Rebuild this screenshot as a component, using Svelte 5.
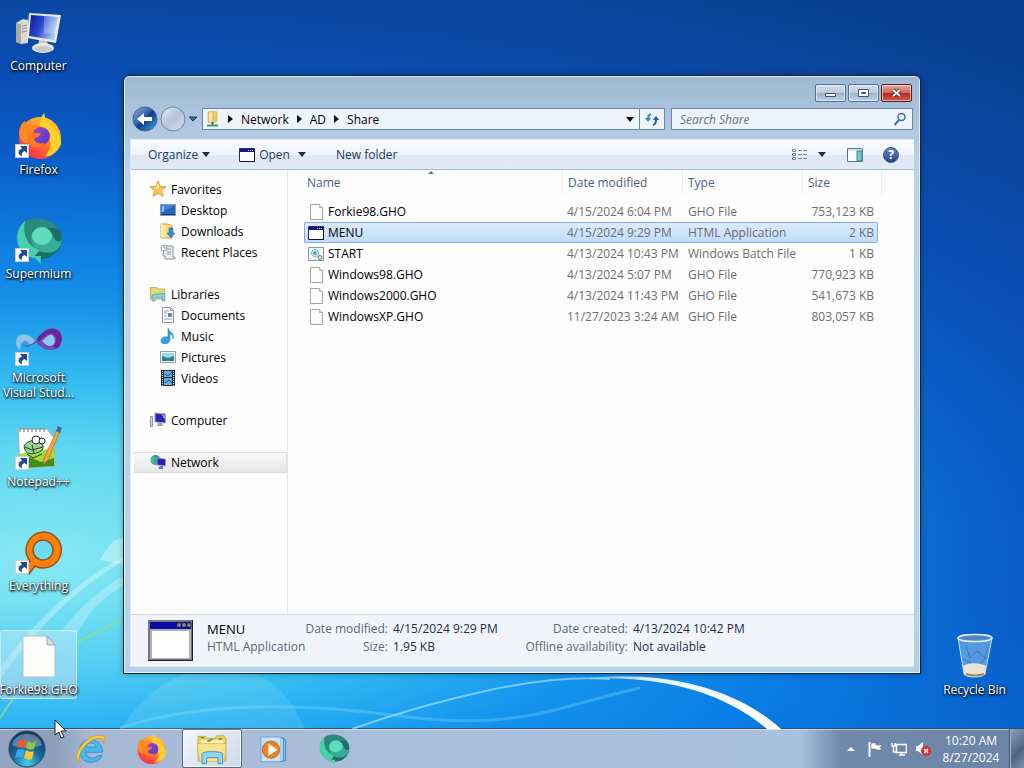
<script>
    const shortcuts = [
        { name: "Computer", icon: "pc", link: false },
        { name: "Firefox", icon: "firefox", link: true },
        { name: "Supermium", icon: "supermium", link: true },
        { name: "Microsoft Visual Stud...", icon: "vs", link: true },
        { name: "Notepad++", icon: "npp", link: true },
        { name: "Everything", icon: "everything", link: true },
        { name: "Forkie98.GHO", icon: "blank", link: false, selected: true }
    ]

    const groups = [
        { name: "Favorites", icon: "star", items: [
            { name: "Desktop", icon: "desktop" },
            { name: "Downloads", icon: "downloads" },
            { name: "Recent Places", icon: "recent" }
        ] },
        { name: "Libraries", icon: "libraries", items: [
            { name: "Documents", icon: "document" },
            { name: "Music", icon: "music" },
            { name: "Pictures", icon: "pictures" },
            { name: "Videos", icon: "videos" }
        ] },
        { name: "Computer", icon: "minipc", items: [] },
        { name: "Network", icon: "network", items: [], selected: true }
    ]

    const files = [
        { name: "Forkie98.GHO", icon: "file", date: "4/15/2024 6:04 PM", type: "GHO File", size: "753,123 KB" },
        { name: "MENU", icon: "app", date: "4/15/2024 9:29 PM", type: "HTML Application", size: "2 KB" },
        { name: "START", icon: "batch", date: "4/13/2024 10:43 PM", type: "Windows Batch File", size: "1 KB" },
        { name: "Windows98.GHO", icon: "file", date: "4/13/2024 5:07 PM", type: "GHO File", size: "770,923 KB" },
        { name: "Windows2000.GHO", icon: "file", date: "4/13/2024 11:43 PM", type: "GHO File", size: "541,673 KB" },
        { name: "WindowsXP.GHO", icon: "file", date: "11/27/2023 3:24 AM", type: "GHO File", size: "803,057 KB" }
    ]

    const pinned = [
        { name: "Internet Explorer", icon: "ie" },
        { name: "Firefox", icon: "firefox" },
        { name: "Windows Explorer", icon: "explorer", active: true },
        { name: "Windows Media Player", icon: "wmp" },
        { name: "Supermium", icon: "supermium" }
    ]

    let selected = $state("MENU")
</script>

<!-- 48px icons, used on the desktop and in the taskbar -->
{#snippet bigIcon(name)}
    <svg class="big" viewBox="0 0 48 48" aria-hidden="true">
        {#if name === "pc"}
            <path d="M1 15l7-4 5 1v23l-7 1-5-2z" fill="#d9d9d3" />
            <path d="M1 15l5 1v20l-5-2z" fill="#a9aaa4" />
            <path d="M7 18l5-1M7 21l5-1M7 24l5-1" stroke="#8b8d88" />
            <path d="M24 32h8l1 7h-10z" fill="#c9c9c3" />
            <ellipse cx="28" cy="40" rx="11" ry="5" fill="#e9e8e0" />
            <ellipse cx="28" cy="41" rx="9" ry="3" fill="#cbcac2" />
            <path d="M14 5l32 2-5 28-29-5z" fill="#ebebe4" />
            <path d="M16 7l27 2-4 23-25-4z" fill="url(#screen)" />
            <path d="M29 8l14 1-2 16-12 1z" fill="#fff" opacity=".25" />
        {:else if name === "firefox"}
            <circle cx="25" cy="26" r="21" fill="url(#fox)" />
            <path d="M29 1c2 5 0 7 5 11 7 6 13 12 12 20-3 8-10 13-16 12 8-8 8-20-4-26-3-6 0-13 3-17z" fill="#ffcf2e" />
            <path d="M4 20C5 13 8 10 10 9l2 5c5-3 9-1 13 0l4 3c-4 1-6 3-9 4-2 5-8 4-7 10-5 1-9-5-9-11z" fill="#ff8a22" />
            <circle cx="26" cy="24" r="9" fill="url(#violet)" />
            <path d="M13 20c5-1 6 2 13 1-1 4-5 4-7 6 1 4 6 6 11 3-4 7-14 7-17 0z" fill="#ff7a20" />
        {:else if name === "supermium"}
            <ellipse cx="25" cy="23" rx="22" ry="20" fill="#1c6f68" />
            <path d="M10 5C-4 18 2 38 18 42l8-9C12 32 9 18 10 5z" fill="#48d0ad" />
            <path d="M10 6c9-7 27-4 34 8-8-4-20-2-27 2 0 8 2 14 9 18C9 30 8 14 10 6z" fill="#2b8a7d" />
            <path d="M17 17c6-6 18-5 21 3 3 7 7 6 9 4-1 10-11 15-19 12-8-1-14-10-11-19z" fill="#35ae97" />
            <ellipse cx="27" cy="20" rx="10" ry="9" fill="#5fdcbe" />
            <path d="M14 40c6 2 8 4 12 8-1-4 0-6 0-8z" fill="#48d0ad" />
        {:else if name === "vs"}
            <g transform="translate(0 8)">
                <path d="M2 10c5-7 14-3 18 3l-4 5C11 9 6 12 5 22c-4-2-5-8-3-12z" fill="#8fc3e6" />
                <path d="M5 14c6 7 13 2 17-3C28 2 37-3 44 3c5 6 3 15-3 18-8 3-15-1-20-7-5 5-11 7-16 0z" fill="#6f4fae" />
                <path d="M27 13c5-5 10-9 12-4 2 5 0 8-3 9-4 0-6-2-9-5z" fill="#8fc6f2" />
                <path d="M22 11C28 2 37-3 44 3c5 6 3 15-3 18l-3-3c5-5 3-10 0-12-5-2-10 4-14 8z" fill="#6d2397" />
            </g>
        {:else if name === "npp"}
            <path d="M3 5h29l7 9 1 28-35 2z" fill="#fff" stroke="#a3a9a0" />
            <path d="M4 30l35-6 1 18-35 2z" fill="#a6dc3a" />
            <path d="M5 38l9-5 12 5 13-4v8l-34 2z" fill="#408c1d" />
            <path d="M5 4v4m4-4v4m4-4v4m4-4v4m4-4v4m4-4v4m4-4v4" stroke="#68716b" />
            <path d="M9 22c4-6 9-6 15-4 6 3 5 8 0 10-7 3-14 3-15-6z" fill="#9bd594" stroke="#274a23" />
            <circle cx="21" cy="16" r="4" fill="#fff" stroke="#222" /><circle cx="27" cy="17" r="3" fill="#fff" stroke="#222" />
            <path d="M10 23l7 3 11-3M12 30l6 4 9-4M17 21l2 8" fill="none" stroke="#23411d" />
            <path d="M42 6l3 1-12 29-4 4v-6z" fill="#f3a640" stroke="#b5702a" stroke-width=".7" />
            <path d="M43 2l4 2-2 5-4-2z" fill="#486996" />
        {:else if name === "everything"}
            <path d="M28 4a18 18 0 1 1-8 34l-6 8-7-4 8-9A18 18 0 0 1 28 4z" fill="#ff7d0b" stroke="#8a581e" stroke-width="1.500" />
            <circle cx="28" cy="22" r="10" fill="#6edaf3" stroke="#8a581e" stroke-width="1.500" />
        {:else if name === "blank"}
            <path d="M8 4h24l8 9v32H8z" fill="#fcfcfa" stroke="#b9bfc3" />
            <path d="M32 4v9h8z" fill="#dbe0e3" stroke="#9ba5ab" />
        {:else if name === "bin"}
            <path d="M7 6l6 36c1 4 20 4 21 0l7-36z" fill="#a6cdf0" opacity=".5" />
            <path d="M7 6l6 36c1 4 20 4 21 0l7-36" fill="none" stroke="#c4def2" />
            <path d="M12 34c6-4 17-3 23 0l-1 8c-3 4-18 4-21 0z" fill="#e8e3d4" />
            <path d="M15 42c5 2 13 2 18 0" stroke="#a08266" stroke-width="2" fill="none" />
            <path d="M15 14l4 12 7-7 8 7 3-11M12 27l8 4M29 31l7-6" fill="none" stroke="#2f62b8" opacity=".7" />
            <ellipse cx="24" cy="6" rx="17" ry="3.500" fill="#4f86c6" stroke="#e0f0fa" stroke-width="1.500" />
        {:else if name === "ie"}
            <path d="M43 29H18c1 10 13 11 17 5h7C38 47 10 50 8 27 8 4 43 4 43 29zM18 21h15c-1-8-14-8-15 0z" fill="#49b8ec" stroke="#1b7fc0" />
            <path d="M8 43C-7 39 18-2 43 4c6 2 3 9 1 13 1-6 0-9-5-9C24 6 4 29 8 43z" fill="#f7cb35" stroke="#c99312" />
        {:else if name === "explorer"}
            <path d="M3 5h11l2 3h13l2-4h11l3 4v34H3z" fill="#edce5e" stroke="#ba972f" />
            <path d="M7 11h34v26H7z" fill="#fff5be" />
            <path d="M2 16h43l-2 27H5z" fill="#f8e48a" stroke="#cfae44" />
            <path d="M7 7h5M20 10h5M34 9h5" stroke="#3ba251" stroke-width="2" /><path d="M17 12h5" stroke="#c8462d" stroke-width="2" />
            <path d="M9 46V31c0-4 31-4 31 0v15h-7V37H16v9z" fill="#94d3f2" stroke="#3e93c7" stroke-width="1.500" />
        {:else if name === "wmp"}
            <path d="M6 6h30v37H6z" fill="#c6e2f4" stroke="#5a94c4" />
            <path d="M36 7l4 1v34l-4 1M40 9l3 1v31l-3 1" fill="#a9d2f1" stroke="#3d83bd" stroke-width="1.500" />
            <circle cx="21" cy="25" r="13" fill="#f18220" stroke="#a9500c" />
            <path d="M17 16l14 9-14 9z" fill="#fff" />
        {/if}
    </svg>
{/snippet}

<!-- 16px icons, used in the folder window -->
{#snippet smallIcon(name)}
    <svg class="small" viewBox="0 0 16 16" aria-hidden="true">
        {#if name === "star"}
            <path d="M8 0l2.200 5.500 5.800.3-4.500 3.700 1.500 6L8 12.200 3 15.500l1.500-6L0 5.800l5.800-.3z" fill="#ffc947" stroke="#d28a2b" stroke-width=".8" />
            <path d="M8 2l1.500 4.500L5 8z" fill="#ffe9a6" />
        {:else if name === "desktop"}
            <path d="M.5 2.500h15v11H.5z" fill="#2b67b7" stroke="#7d9cc2" />
            <path d="M1 3h14L1 11z" fill="#4385d4" /><path d="M2 5h2M2 7h2M2 9h2" stroke="#dbecff" /><path d="M1 12.500h14" stroke="#183e79" />
        {:else if name === "downloads"}
            <path d="M1 1h7l4 2v12H1z" fill="#f4d878" stroke="#d0a945" /><path d="M1 1l5 2v12l-5-1z" fill="#fceba8" />
            <path d="M9 5h4v5h2l-4 5-4-5h2z" fill="#3b8bd3" stroke="#2261a0" stroke-width=".5" />
        {:else if name === "recent"}
            <path d="M4 2h9v11h2v2H5v-3H3z" fill="#e7e9eb" stroke="#8d969c" /><path d="M7 5h4M7 8h4M7 10h4" stroke="#96a1aa" />
            <circle cx="4" cy="4" r="3" fill="#f5f8fb" stroke="#929fa9" /><path d="M4 2v2h2" stroke="#5b7b99" fill="none" stroke-width=".7" />
        {:else if name === "libraries"}
            <path d="M.5 1.500h6l1 1.500h7v10h-14z" fill="#f3da76" stroke="#c8a84a" /><path d="M3 5h12v8H3z" fill="#c5dd7b" /><path d="M2 15V9l13-2v8h-3v-4l-7 1v3z" fill="#8fcbe4" stroke="#4796b9" stroke-width=".6" />
        {:else if name === "document"}
            <path d="M2.500.5h8l3 3v12h-11z" fill="#fff" stroke="#8d949b" /><path d="M10.500.5v3h3" fill="none" stroke="#8d949b" /><path d="M4 4h5M4 6h3M4 9h3M4 12h8" stroke="#8b9ab6" /><path d="M8 6h4v4H8z" fill="#6a83b9" />
        {:else if name === "music"}
            <path d="M8 0c1 4 7 5 5 11 0-4-2-5-3-5v6c-1 5-9 5-9 1 0-4 4-5 7-4z" fill="#389fdb" stroke="#267bb5" stroke-width=".5" />
        {:else if name === "pictures"}
            <path d="M.5 2.500h15v11H.5z" fill="#fff" stroke="#8da0aa" /><path d="M2 4h12v8H2z" fill="#94d9ec" /><path d="M2 7l3 1 3 1 3-1 3-1v5H2z" fill="#25878d" />
        {:else if name === "videos"}
            <path d="M1 0h14v16H1z" fill="#1c2f45" /><path d="M4 1h8v6H4zM4 8h8v7H4z" fill="#6da9d7" /><path d="M2.500 1v15M13.500 1v15" stroke="#e8eff4" stroke-dasharray="1 1" /><path d="M5 4l3 2 4-4M5 13l4-3 3 3" stroke="#1f5685" fill="none" />
        {:else if name === "minipc"}
            <path d="M.5 4.500h2v10h-2z" fill="#d2d5dc" stroke="#8d94a4" /><path d="M5 1l10.500 1v9L5 10z" fill="#2824b5" stroke="#a2a8b9" /><path d="M11 2l4 1v5z" fill="#7f96e5" /><path d="M8 11h4l1 3H7z" fill="#9aa1b2" />
        {:else if name === "network"}
            <circle cx="5.500" cy="6" r="5" fill="#2b98a8" /><path d="M2 3c3-2 5 1 2 3l1 4C1 10 0 6 2 3z" fill="#51bf79" /><path d="M7 4l8.500 1v7L7 11z" fill="#2522b8" stroke="#a4acc6" stroke-width=".8" /><path d="M10 12h3v3H8z" fill="#7079aa" />
        {:else if name === "file"}
            <path d="M2.500.5h9l3 3v12h-12z" fill="#fdfdfc" stroke="#a6a5a2" /><path d="M11.500.5v3h3" fill="#eee" stroke="#b5b4b1" />
        {:else if name === "app"}
            <path d="M.5 1.500h15v13H.5z" fill="#fff" stroke="#2c2c55" /><path d="M1 2h14v3H1z" fill="#151585" /><path d="M9 3.500h1m1 0h1m1 0h1" stroke="#ccd" /><path d="M1 14.500h15M15.500 2v13" stroke="#11112d" />
        {:else if name === "batch"}
            <path d="M.5 1.500h15v13H.5z" fill="#f2f6f7" stroke="#8b969d" /><circle cx="7" cy="7" r="3.500" fill="#c9e9ed" stroke="#4a98a2" stroke-dasharray="2 1" /><circle cx="7" cy="7" r="1.200" fill="none" stroke="#397781" /><circle cx="12" cy="11.500" r="2" fill="#d9eeee" stroke="#4a8087" />
        {:else if name === "share"}
            <path d="M3 1l4-1v12l-4-1zM8 0l4 1v9l-4 2z" fill="#edcc67" stroke="#bd963d" stroke-width=".5" /><path d="M4 2l3-1v10l-3-1z" fill="#fbe9a7" /><path d="M7.500 11v3" stroke="#567" stroke-width="2" /><path d="M2 14.500h11" stroke="#33a37c" stroke-width="2" />
        {/if}
    </svg>
{/snippet}

<svg class="defs" aria-hidden="true">
    <defs>
        <linearGradient id="screen" x2="1" y2=".4"><stop stop-color="#0a1a9a" /><stop offset=".5" stop-color="#2848cc" /><stop offset="1" stop-color="#a9c8f5" /></linearGradient>
        <linearGradient id="fox" x1=".8" x2=".2" y2="1"><stop stop-color="#ffd52d" /><stop offset=".5" stop-color="#ff7a28" /><stop offset="1" stop-color="#f6264f" /></linearGradient>
        <linearGradient id="violet" y2="1"><stop stop-color="#a243cf" /><stop offset="1" stop-color="#4a3cc9" /></linearGradient>
        <linearGradient id="arc"><stop stop-color="#dff5ff" stop-opacity=".3" /><stop offset=".3" stop-color="#fff" stop-opacity=".9" /><stop offset="1" stop-color="#fff" /></linearGradient>
        <radialGradient id="orb" cx=".5" cy=".9" r=".9"><stop stop-color="#45d0ee" /><stop offset=".45" stop-color="#17699e" /><stop offset="1" stop-color="#17355c" /></radialGradient>
        <linearGradient id="back" y2="1"><stop stop-color="#8fb3df" /><stop offset=".45" stop-color="#2b5fae" /><stop offset=".5" stop-color="#0d3688" /><stop offset="1" stop-color="#3fb4e8" /></linearGradient>
        <linearGradient id="forward" y2="1"><stop stop-color="#e3ebf5" /><stop offset=".5" stop-color="#b4c5da" /><stop offset="1" stop-color="#d6e3f0" /></linearGradient>
    </defs>
</svg>

<div class="screen">
    <main class="desktop">
        <svg class="wallpaper" viewBox="0 0 1024 768" preserveAspectRatio="none" aria-hidden="true">
            <path d="M123 538C112 538 106 550 100 560L123 565z" fill="#fff" opacity=".35" />
            <path d="M125 560C90 580 40 620 0 680V668C40 615 85 575 125 556z" fill="#fff" opacity=".3" />
            <path d="M125 575C90 595 75 615 60 632H78C90 610 105 595 125 585z" fill="#fff" opacity=".25" />
            <path d="M78 642Q105 628 126 618M0 718Q8 706 15 696" stroke="#8fe08a" stroke-width="2" fill="none" opacity=".8" />
            <path d="M120 730C170 650 270 640 305 730z" fill="#aef4f0" opacity=".15" />
            <path d="M120 728C190 705 280 700 400 716S560 705 640 688" stroke="#a5eef8" stroke-width="3" fill="none" opacity=".25" />
            <path d="M352 729Q420 705 490 690T610 679" stroke="#b5eaff" stroke-width="2" fill="none" opacity=".6" />
            <path d="M590 679C660 675 724 692 767 729H781C732 684 655 671 590 678z" fill="url(#arc)" />
        </svg>

        <div class="shortcuts">
            {#each shortcuts as s}
                <button class="shortcut" class:picked={s.selected}>
                    <span class="pic">
                        {@render bigIcon(s.icon)}
                        {#if s.link}
                            <svg class="arrow" viewBox="0 0 14 14" aria-hidden="true">
                                <path d="M.5.5h13v13H.5z" fill="#fff" stroke="#c9d0d8" />
                                <path d="M5 2h7v7L9.500 7C7 8 6 10 7 12.500 2 10 3 6 7 4.500z" fill="#1d4a96" />
                            </svg>
                        {/if}
                    </span>
                    <span class="caption">{s.name}</span>
                </button>
            {/each}
        </div>

        <button class="shortcut bin">
            <span class="pic">{@render bigIcon("bin")}</span>
            <span class="caption">Recycle Bin</span>
        </button>

        <section class="window" aria-label="Share">
            <div class="titlebar">
                <button aria-label="Minimize"><svg viewBox="0 0 29 16"><path d="M9.500 8.500h10v3h-10z" fill="#fff" stroke="#47536a" /></svg></button>
                <button aria-label="Maximize"><svg viewBox="0 0 29 16"><path d="M9.500 4.500h10v7h-10zM12.500 7.500h4v1h-4z" fill="#fff" stroke="#47536a" /></svg></button>
                <button class="close" aria-label="Close"><svg viewBox="0 0 29 16"><path d="M11 5l7 6M18 5l-7 6" stroke="#5d2a2a" stroke-width="4" /><path d="M11 5l7 6M18 5l-7 6" stroke="#fff" stroke-width="2" /></svg></button>
            </div>

            <nav class="navbar" aria-label="Address">
                <div class="travel">
                    <button aria-label="Back"><svg viewBox="0 0 26 26"><circle cx="13" cy="13" r="12" fill="url(#back)" stroke="#4a6289" /><path d="M5 13l7-6v4h8v4h-8v4z" fill="#fff" /></svg></button>
                    <button aria-label="Forward"><svg viewBox="0 0 26 26"><circle cx="13" cy="13" r="12" fill="url(#forward)" stroke="#71849e" /></svg></button>
                    <button class="tiny" aria-label="Recent pages"><svg viewBox="0 0 10 8"><path d="M1 2h8L5 6z" fill="#2c6a8c" stroke="#173e5a" /></svg></button>
                </div>
                <div class="address">
                    {@render smallIcon("share")}
                    {#each ["Network", "AD", "Share"] as crumb}
                        <svg class="chevron" viewBox="0 0 5 8" aria-hidden="true"><path d="M0 0l5 4-5 4z" fill="#111" /></svg>
                        <a href="#{crumb}">{crumb}</a>
                    {/each}
                    <button class="drop" aria-label="Previous locations"><svg viewBox="0 0 8 5"><path d="M0 0h8L4 5z" fill="#111" /></svg></button>
                    <button class="refresh" aria-label="Refresh">
                        <svg viewBox="0 0 16 16"><path d="M7 3C4 4 4 6 4 9" fill="none" stroke="#2b8cbd" stroke-width="2" /><path d="M1 7h6l-3 4z" fill="#2b8cbd" /><path d="M9 14c3-1 3-3 3-6" fill="none" stroke="#245f9c" stroke-width="2" /><path d="M9 9h6l-3-4z" fill="#245f9c" /></svg>
                    </button>
                </div>
                <label class="search">
                    <input type="text" placeholder="Search Share" aria-label="Search Share" />
                    <svg viewBox="0 0 14 14" aria-hidden="true"><circle cx="8.500" cy="5" r="3.500" fill="#e7f2fc" stroke="#406eab" stroke-width="1.500" /><path d="M6 8l-4.500 5" stroke="#406eab" stroke-width="2" /></svg>
                </label>
            </nav>

            <div class="client">
                <div class="toolbar">
                    <button>Organize <i class="caret"></i></button>
                    <button class="open">{@render smallIcon("app")} Open</button>
                    <button class="split" aria-label="Open with"><i class="caret"></i></button>
                    <button class="folder">New folder</button>
                    <button class="views" aria-label="Change your view">
                        <svg viewBox="0 0 16 14"><path d="M.5 1.500h3v2h-3zM.5 5.500h3v2h-3zM.5 9.500h3v2h-3z" fill="#fff" stroke="#7f8692" /><path d="M6 2.500h9M6 6.500h9M6 10.500h9" stroke="#7f8692" stroke-dasharray="4 1" /></svg>
                        <i class="caret"></i>
                    </button>
                    <button aria-label="Preview pane"><svg viewBox="0 0 16 14"><path d="M.5.5h15v13H.5z" fill="#fff" stroke="#54748c" /><path d="M1 1h14v2H1z" fill="#d8e4ee" /><path d="M10 3h5v10h-5z" fill="#74c4c9" stroke="#3b8b91" /></svg></button>
                    <button aria-label="Help" class="help">?</button>
                </div>

                <div class="panes">
                    <aside class="tree">
                        {#each groups as g}
                            <ul>
                                <li class:current={g.selected}><a href="#{g.name}">{@render smallIcon(g.icon)}{g.name}</a></li>
                                {#each g.items as item}
                                    <li class="child"><a href="#{item.name}">{@render smallIcon(item.icon)}{item.name}</a></li>
                                {/each}
                            </ul>
                        {/each}
                    </aside>

                    <div class="listing">
                        <table>
                            <thead>
                                <tr>
                                    <th class="name sorted">Name</th>
                                    <th class="date">Date modified</th>
                                    <th class="type">Type</th>
                                    <th class="size">Size</th>
                                </tr>
                            </thead>
                            <tbody>
                                {#each files as f}
                                    <tr class:chosen={selected === f.name} onclick={() => selected = f.name}>
                                        <td class="name"><span>{@render smallIcon(f.icon)}{f.name}</span></td>
                                        <td>{f.date}</td>
                                        <td class="kind">{f.type}</td>
                                        <td class="num">{f.size}</td>
                                    </tr>
                                {/each}
                            </tbody>
                        </table>
                    </div>
                </div>

                <footer class="details">
                    <svg class="preview" viewBox="0 0 45 41" aria-hidden="true">
                        <path d="M0 0h45v41H0z" fill="#222" /><path d="M0 0h44v40H0z" fill="#777" /><path d="M2 2h41v37H2z" fill="#b0b0b0" />
                        <path d="M2 2h41v7H2z" fill="#0a0aa4" /><path d="M29 3h4v4h-4zM34 3h4v4h-4zM39 3h4v4h-4z" fill="#889" stroke="#223" stroke-width=".7" /><path d="M4 11h37v27H4z" fill="#fff" />
                    </svg>
                    <div class="title"><strong>MENU</strong><span>HTML Application</span></div>
                    <dl class="first">
                        <dt>Date modified:</dt><dd>4/15/2024 9:29 PM</dd>
                        <dt>Size:</dt><dd>1.95 KB</dd>
                    </dl>
                    <dl>
                        <dt>Date created:</dt><dd>4/13/2024 10:42 PM</dd>
                        <dt>Offline availability:</dt><dd>Not available</dd>
                    </dl>
                </footer>
            </div>
        </section>
    </main>

    <footer class="taskbar">
        <button class="start" aria-label="Start">
            <svg viewBox="0 0 38 38">
                <circle cx="19" cy="19" r="18" fill="url(#orb)" stroke="#28476c" />
                <path d="M4 15C7 0 31 0 34 15c-8 4-22 4-30 0z" fill="#fff" opacity=".3" />
                <path d="M11 11q4-3 7-1l-1 8q-4-2-8 0z" fill="#ee5a29" />
                <path d="M20 11q4 3 8 0l-2 8q-4 2-8-1z" fill="#8ac63f" />
                <path d="M9 20q4-2 8 0l-2 8q-4-2-8 0z" fill="#3aa5e5" />
                <path d="M18 20q4 3 8 1l-2 8q-4 2-8-1z" fill="#fdc62e" />
            </svg>
        </button>
        {#each pinned as p}
            <button class="task" class:active={p.active} aria-label={p.name}>{@render bigIcon(p.icon)}</button>
        {/each}
        <div class="tray">
            <button aria-label="Show hidden icons"><svg viewBox="0 0 16 16"><path d="M4 10h8L8 6z" fill="#fff" /></svg></button>
            <button aria-label="Action Center"><svg viewBox="0 0 16 16"><path d="M2.500 1v15" stroke="#fff" stroke-width="2" /><path d="M4 2h5v2h6l-2 2.500L15 9H9V8H4z" fill="#fff" stroke="#53637b" stroke-width=".5" /></svg></button>
            <button aria-label="Network"><svg viewBox="0 0 16 16"><path d="M5.500 3.500h10v8h-10zM8 14h6M10.500 12v2M1 2v3h3V2M1 5h3M2.500 5v6H5" fill="none" stroke="#fff" stroke-width="1.500" /></svg></button>
            <button aria-label="Volume"><svg viewBox="0 0 16 16"><path d="M1 5h2l5-4v13l-5-4H1z" fill="#fff" /><circle cx="11" cy="10" r="5" fill="#d8322b" /><path d="M9 8l4 4M13 8l-4 4" stroke="#fff" stroke-width="1.500" /></svg></button>
        </div>
        <div class="clock"><time>10:20 AM</time><time>8/27/2024</time></div>
        <button class="peek" aria-label="Show desktop"></button>
    </footer>

    <svg class="cursor" viewBox="0 0 13 20" aria-hidden="true"><path d="M1 1v15l4-3 2 6 3-1-3-6h5z" fill="#fff" stroke="#222" /></svg>
</div>

<style>
    :global(body) {
        margin: 0;
    }
    .screen {
        display: flex;
        flex-direction: column;
        position: relative;
        height: 100vh;
        overflow: hidden;
        font: 12px/15px "Open Sans", "Noto Sans", sans-serif;
        background:
            linear-gradient(to top, rgba(0, 140, 255, 0.35), transparent 22%),
            radial-gradient(ellipse 1300px 540px at 40px 560px, #86e8f2, #60d8f2 20%, #38bff0 32%, #1793e8 47%, #0c7ade 60%, #0a5cc6 76%, #0a4cb0 92%, #0b47a3 105%, #09408f 120%);
    }
    button {
        display: flex;
        align-items: center;
        padding: 0;
        border: 0;
        background: none;
        font: inherit;
        color: inherit;
    }
    a {
        color: inherit;
        text-decoration: none;
    }
    .defs {
        position: absolute;
        width: 0;
        height: 0;
    }
    .big {
        width: 48px;
        height: 48px;
    }
    .small {
        flex: none;
        width: 16px;
        height: 16px;
    }

    .desktop {
        flex: 1;
        display: flex;
        justify-content: space-between;
        align-items: flex-start;
        min-height: 0;
        position: relative;
    }
    .wallpaper {
        position: absolute;
        width: 100%;
        height: 100vh;
    }
    .shortcuts {
        display: grid;
        grid-auto-rows: 104px;
        align-items: start;
        padding-top: 6px;
        position: relative;
    }
    .shortcut {
        flex-direction: column;
        box-sizing: border-box;
        width: 77px;
        padding: 1px 0;
        border: 1px solid transparent;
        border-radius: 3px;
        color: #fff;
        text-shadow: 0 1px 2px #000, 1px 1px 3px #000;
    }
    .picked {
        border-color: rgba(205, 238, 250, 0.8);
        background: linear-gradient(rgba(255, 255, 255, 0.3), rgba(190, 220, 235, 0.6));
    }
    .bin {
        align-self: flex-end;
        margin: 0 11px 29px 0;
        position: relative;
    }
    .pic {
        position: relative;
        height: 50px;
    }
    .arrow {
        position: absolute;
        left: 0;
        bottom: 4px;
        width: 14px;
        height: 14px;
    }

    .window {
        display: flex;
        flex-direction: column;
        box-sizing: border-box;
        position: absolute;
        inset: 75px 103px 54px 123px;
        padding: 0 6px 6px;
        border: 1px solid #14263d;
        border-radius: 6px 6px 0 0;
        background: linear-gradient(#9fb9d4, #b6cce4 70px, #bdd5ec 120px, #b5d0e9);
        box-shadow: inset 0 0 0 1px rgba(240, 250, 255, 0.8), 0 0 6px rgba(0, 0, 0, 0.3);
    }
    .titlebar {
        display: flex;
        justify-content: flex-end;
        gap: 2px;
        padding: 8px 2px 4px;
    }
    .titlebar button {
        border: 1px solid #5a6f8d;
        border-radius: 2px;
        background: linear-gradient(#d3e0ef, #b9cbe1 48%, #9bb2ce 52%, #bdd2e8);
        box-shadow: inset 0 0 0 1px rgba(255, 255, 255, 0.5);
    }
    .titlebar .close {
        border-color: #5b1c21;
        background: linear-gradient(#e5a99e, #d0695b 48%, #b6281d 52%, #d05f45);
    }
    .titlebar svg {
        width: 29px;
        height: 16px;
    }

    .navbar {
        display: flex;
        align-items: center;
        gap: 6px;
        padding: 0 1px 7px 2px;
    }
    .travel {
        display: flex;
        align-items: center;
        gap: 2px;
        margin-right: -2px;
    }
    .travel svg {
        width: 26px;
        height: 26px;
    }
    .travel .tiny svg {
        width: 10px;
        height: 8px;
    }
    .address, .search {
        display: flex;
        align-items: center;
        box-sizing: border-box;
        height: 22px;
        border: 1px solid #6b86a5;
        background: #eef4fb;
    }
    .address {
        flex: 1;
        padding-left: 2px;
    }
    .address a {
        padding: 0 8px;
    }
    .address .chevron {
        width: 5px;
        height: 8px;
    }
    .address .small + .chevron {
        margin-left: 7px;
    }
    .drop {
        margin-left: auto;
        padding: 0 5px;
    }
    .drop svg {
        width: 8px;
        height: 5px;
    }
    .refresh {
        height: 20px;
        padding: 0 4px;
        border-left: 1px solid #6b86a5;
    }
    .refresh svg {
        width: 16px;
        height: 16px;
    }
    .search {
        flex: 0 1 242px;
        padding: 0 5px 0 8px;
    }
    .search input {
        flex: 1;
        min-width: 0;
        padding: 0;
        border: 0;
        outline: 0;
        background: none;
        font: inherit;
    }
    .search input::placeholder {
        font-style: italic;
        color: #6b7280;
        opacity: 1;
    }
    .search svg {
        width: 14px;
        height: 14px;
    }

    .client {
        flex: 1;
        display: flex;
        flex-direction: column;
        min-height: 0;
        border: 1px solid #dcebf7;
        border-width: 1px 0 1px 1px;
    }
    .toolbar {
        display: flex;
        align-items: center;
        height: 29px;
        padding: 0 15px 0 17px;
        border-bottom: 1px solid #a9bbd2;
        background: linear-gradient(#fbfdff, #edf2fb 50%, #dfe7f5 52%, #e2eaf7);
        color: #1e395b;
    }
    .caret {
        margin-left: 4px;
        border: 4px solid transparent;
        border-top: 5px solid #1e2c45;
        border-bottom: 0;
    }
    .open {
        gap: 4px;
        margin-left: 29px;
    }
    .split {
        margin-left: 4px;
    }
    .folder {
        margin-left: 30px;
    }
    .views {
        gap: 6px;
        margin-left: auto;
    }
    .toolbar button > svg:not(.small) {
        width: 16px;
        height: 14px;
    }
    .views + button {
        margin: 0 20px 0 21px;
    }
    .help {
        justify-content: center;
        width: 16px;
        height: 16px;
        border: 1px solid #3c5288;
        border-radius: 8px;
        background: linear-gradient(#6b86c8, #27438f);
        color: #fff;
        font-weight: bold;
    }

    .panes {
        flex: 1;
        display: flex;
        min-height: 0;
        background: #fdfdfe;
    }
    .tree {
        flex: 0 0 157px;
        box-sizing: border-box;
        padding: 9px 0 0 3px;
        border-right: 1px solid #dfe7f2;
    }
    .tree ul {
        margin: 0 0 21px;
        padding: 0;
        list-style: none;
    }
    .tree li {
        box-sizing: border-box;
        height: 21px;
        padding: 2px 0 0 16px;
    }
    .tree .child {
        padding-left: 26px;
    }
    .tree .current {
        padding-top: 1px;
        border: 1px solid #dcdcdc;
        border-width: 1px 1px 1px 0;
        background: linear-gradient(#f8f8f8, #e6e6e6);
    }
    .tree a {
        display: flex;
        align-items: center;
        gap: 5px;
    }

    .listing {
        flex: 1;
        min-width: 0;
        padding-left: 16px;
    }
    table {
        width: 574px;
        table-layout: fixed;
        border-collapse: separate;
        border-spacing: 0;
        color: #6d6d6d;
    }
    th {
        height: 24px;
        padding: 0 5px;
        border-left: 1px solid #e9edf2;
        font-weight: normal;
        text-align: left;
        color: #4c607a;
        position: relative;
    }
    th.name {
        width: 247px;
        padding: 0 8px 0 3px;
        border: 0;
    }
    th.date, th.type {
        width: 109px;
    }
    .sorted::before {
        content: "";
        position: absolute;
        top: 1px;
        left: 124px;
        border: 3px solid transparent;
        border-top: 0;
        border-bottom-color: #5a7690;
    }
    th.size::after {
        content: "";
        position: absolute;
        inset: 0 -4px 0 auto;
        border-right: 1px solid #e9edf2;
    }
    tbody::before {
        content: "";
        display: block;
        height: 7px;
    }
    td {
        height: 19px;
        padding: 0 5px;
        border: 1px solid transparent;
        border-width: 1px 0;
        white-space: nowrap;
    }
    td.name {
        padding-left: 4px;
        color: #000;
    }
    td.name span {
        display: flex;
        align-items: center;
        gap: 4px;
    }
    td.kind {
        padding-left: 6px;
    }
    .num {
        padding: 0 4px;
        text-align: right;
    }
    .chosen td {
        border-color: #84acdd;
        background: linear-gradient(#dcebfd, #c1dcfc);
    }
    .chosen td:first-child {
        border-left: 1px solid #84acdd;
        border-radius: 2px 0 0 2px;
        padding-left: 3px;
    }
    .chosen td:last-child {
        border-right: 1px solid #84acdd;
        border-radius: 0 2px 2px 0;
        padding-right: 3px;
    }

    .details {
        display: flex;
        align-items: flex-start;
        height: 46px;
        padding: 5px 17px 0;
        border-top: 1px solid #ccd7e6;
        background: #f1f5fb;
        line-height: 18px;
        white-space: nowrap;
        color: #5a6779;
    }
    .preview {
        flex: none;
        width: 45px;
        height: 41px;
        margin-right: 14px;
    }
    .title {
        display: grid;
        width: 97px;
    }
    .title strong {
        font-size: 13px;
        font-weight: normal;
        color: #000;
    }
    dl {
        display: grid;
        grid-template-columns: 104px 120px;
        column-gap: 5px;
        margin: 0;
    }
    dl.first {
        grid-template-columns: 84px 131px;
    }
    dt {
        display: flex;
        justify-content: flex-end;
    }
    dd {
        margin: 0;
        color: #1e2d4a;
    }

    .taskbar {
        display: flex;
        align-items: center;
        flex: none;
        height: 39px;
        border-top: 1px solid #31506f;
        background: linear-gradient(90deg, #93a5c0, #8a9dba 55px, #a6b8d2 90px, #a9bcd8 200px, #a9c2df 800px, #7189ab 840px, #6c84a6);
        box-shadow: inset 0 1px 0 rgba(255, 255, 255, 0.5);
    }
    .start {
        padding: 0 14px 0 8px;
    }
    .start svg {
        width: 38px;
        height: 38px;
    }
    .task {
        justify-content: center;
        box-sizing: border-box;
        width: 60px;
        height: 39px;
        margin-right: 1px;
        border: 1px solid transparent;
        border-radius: 2px;
    }
    .task.active {
        border-color: #4f6a87;
        background: linear-gradient(135deg, #f2f6fa, #ccd9e8);
        box-shadow: inset 0 0 0 1px #f5f9fc;
    }
    .task .big {
        width: 32px;
        height: 32px;
    }
    .tray {
        display: flex;
        gap: 8px;
        margin-left: auto;
    }
    .tray svg {
        width: 16px;
        height: 16px;
    }
    .clock {
        display: grid;
        width: 78px;
        padding-left: 2px;
        box-sizing: border-box;
        line-height: 17px;
        text-align: center;
        color: #fff;
    }
    .peek {
        width: 15px;
        height: 39px;
        border-left: 1px solid #3f5370;
        background: linear-gradient(135deg, #8ba0bd, #4f6482 60%, #7b91af);
        box-shadow: inset 1px 0 0 #a8b9cf;
    }
    .cursor {
        position: absolute;
        left: 54px;
        top: 719px;
        width: 13px;
        height: 20px;
    }
</style>
